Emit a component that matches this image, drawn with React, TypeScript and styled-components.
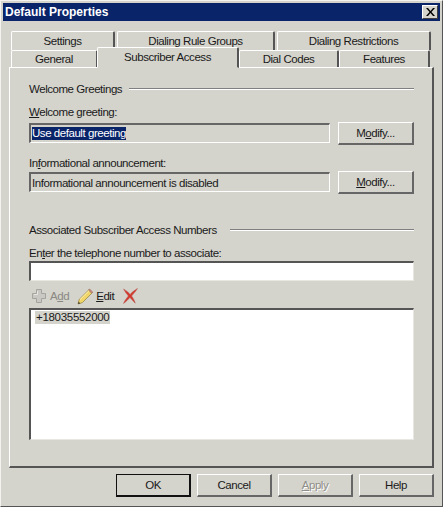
import styled, { createGlobalStyle } from "styled-components"

const GlobalStyle = createGlobalStyle`
    html, body {
        margin: 0;
        padding: 0;
        background: #d4d3cc;
    }
    * { box-sizing: border-box; }
`

const backTabs = [
    { label: "Settings", width: 104, gap: 2 },
    { label: "Dialing Rule Groups", width: 158, gap: 2 },
    { label: "Dialing Restrictions", width: 154, gap: 0 },
]

const PlusIcon = () => (
    <svg width="16" height="16" viewBox="0 0 16 16">
        <path d="M5.500 1.500h5v4h4v5h-4v4h-5v-4h-4v-5h4z" fill="#c9c8c2" stroke="#a5a49e" />
        <path d="M6.500 3v3.500H3" fill="none" stroke="#e8e7e2" />
    </svg>
)

const PencilIcon = () => (
    <svg width="16" height="17" viewBox="0 0 16 17">
        <path d="M1 16l1.200-4.600L11.600 2l3.200 3.200-9.400 9.400z" fill="#f2d568" stroke="#9a8a45" strokeWidth="0.8" />
        <path d="M3 11.600L12.300 2.400" stroke="#fff3b5" />
        <path d="M11.600 2l1-1 3.200 3.200-1 1z" fill="#d98b80" stroke="#8f6a55" strokeWidth="0.6" />
        <path d="M1 16l.6-2.400 1.800 1.800z" fill="#4c4536" />
    </svg>
)

const DeleteIcon = () => (
    <svg width="16" height="16" viewBox="0 0 15 15">
        <path d="M1.500 1c3.500 2.200 5 3.800 6.100 5C9.500 4 11.500 2.300 14.500.5c-1.700 2.800-3.900 5-5.500 7 1.300 1.800 2.500 3.900 3.400 6.700-1.800-1.900-3.500-3.800-5-5.300C5.700 10.700 4 12.500 1.500 14.500c1-2.800 2.800-5 4.500-7C4.300 5.500 2.800 3.500 1.500 1z" fill="#d4372c" stroke="#b9584f" strokeWidth="0.5" />
    </svg>
)

const App = () => {
    return (
        <>
            <GlobalStyle />
            <Dialog>
                <TitleBar>
                    <Title>Default Properties</Title>
                    <CloseButton>
                        <svg width="9" height="8" viewBox="0 0 9 8">
                            <path d="M0 0h2l2.500 3L7 0h2L5.500 4 9 8H7L4.500 5 2 8H0l3.500-4z" fill="#000" />
                        </svg>
                    </CloseButton>
                </TitleBar>
                <TabArea>
                    <BackRow>
                        {backTabs.map((tab) => (
                            <Tab key={tab.label} $width={tab.width} $gap={tab.gap}>{tab.label}</Tab>
                        ))}
                    </BackRow>
                    <FrontRow>
                        <Tab $width={87} $gap={0}>General</Tab>
                        <SelectedTab $width={142} $gap={0}>Subscriber Access</SelectedTab>
                        <Tab $width={100} $gap={0}>Dial Codes</Tab>
                        <Tab $width={91} $gap={0}>Features</Tab>
                    </FrontRow>
                </TabArea>
                <Panel>
                    <GroupHeading>
                        <span>Welcome Greetings</span>
                        <Rule />
                    </GroupHeading>
                    <FieldLabel $top={9}><Key>W</Key>elcome greeting:</FieldLabel>
                    <FieldRow>
                        <ReadOnlyBox><Selected>Use default greeting</Selected></ReadOnlyBox>
                        <SideButton>M<Key>o</Key>dify...</SideButton>
                    </FieldRow>
                    <FieldLabel $top={11}>In<Key>f</Key>ormational announcement:</FieldLabel>
                    <SecondFieldRow>
                        <ReadOnlyBox>Informational announcement is disabled</ReadOnlyBox>
                        <SideButton><Key>M</Key>odify...</SideButton>
                    </SecondFieldRow>
                    <SecondHeading>
                        <span>Associated Subscriber Access Numbers</span>
                        <Rule />
                    </SecondHeading>
                    <FieldLabel $top={9}>En<Key>t</Key>er the telephone number to associate:</FieldLabel>
                    <PhoneInput />
                    <Toolbar>
                        <ToolButton $disabled>
                            <PlusIcon />
                            <span>A<Key>d</Key>d</span>
                        </ToolButton>
                        <ToolButton>
                            <PencilIcon />
                            <span><Key>E</Key>dit</span>
                        </ToolButton>
                        <ToolButton>
                            <DeleteIcon />
                        </ToolButton>
                    </Toolbar>
                    <NumberList>
                        <NumberItem>+18035552000</NumberItem>
                    </NumberList>
                </Panel>
                <Footer>
                    <DefaultButton>OK</DefaultButton>
                    <FooterButton>Cancel</FooterButton>
                    <FooterButton $disabled><Key>A</Key>pply</FooterButton>
                    <FooterButton>Help</FooterButton>
                </Footer>
            </Dialog>
        </>
    )
}

export default App

const Dialog = styled.div`
    width: 443px;
    height: 507px;
    display: flex;
    flex-direction: column;
    padding: 2px;
    background: #d4d3cc;
    border-left: 1px solid #f4f3ef;
    border-top: 1px solid #f4f3ef;
    border-right: 1px solid #555;
    border-bottom: 1px solid #555;
    font-family: "Liberation Sans", Arial, sans-serif;
    font-size: 11.5px;
    letter-spacing: -0.45px;
    color: #1a1a1a;
`

const TitleBar = styled.div`
    height: 18px;
    flex: none;
    display: flex;
    align-items: center;
    justify-content: space-between;
    padding: 0 2px;
    background: #0a246a;
`

const Title = styled.div`
    color: #fff;
    font-size: 12px;
    font-weight: bold;
    letter-spacing: 0;
`

const CloseButton = styled.div`
    width: 16px;
    height: 14px;
    display: flex;
    align-items: center;
    justify-content: center;
    background: #d4d3cc;
    border: 1px solid;
    border-color: #fff #404040 #404040 #fff;
`

const TabArea = styled.div`
    flex: none;
    display: flex;
    flex-direction: column;
    padding: 10px 0 0 8px;
`

const BackRow = styled.div`
    display: flex;
    height: 19px;
`

const FrontRow = styled.div`
    display: flex;
    align-items: flex-end;
    height: 17px;
    position: relative;
    z-index: 1;
`

const Tab = styled.div<{ $width: number; $gap: number }>`
    width: ${(p) => p.$width}px;
    margin-right: ${(p) => p.$gap}px;
    height: 100%;
    flex: none;
    display: flex;
    align-items: center;
    justify-content: center;
    background: #d4d3cc;
    border-top: 1px solid #fff;
    border-left: 1px solid #fff;
    border-right: 2px solid #555;
    border-radius: 2px 2px 0 0;
`

const SelectedTab = styled(Tab)`
    height: 21px;
    margin-left: -1px;
    padding-bottom: 1px;
    border-bottom: 1px solid #d4d3cc;
    margin-bottom: -1px;
`

const Panel = styled.div`
    width: 425px;
    height: 401px;
    flex: none;
    margin-left: 6px;
    padding: 14px 18px 0 19px;
    display: flex;
    flex-direction: column;
    background: #d4d3cc;
    border-top: 1px solid #fff;
    border-left: 1px solid #fff;
    border-right: 2px solid #555;
    border-bottom: 2px solid #555;
`

const GroupHeading = styled.div`
    display: flex;
    align-items: center;
    gap: 7px;
    height: 14px;
`

const SecondHeading = styled(GroupHeading)`
    margin-top: 29px;
    gap: 13px;
`

const Rule = styled.div`
    flex: 1;
    height: 2px;
    background: #808080;
    border-bottom: 1px solid #fff;
`

const FieldLabel = styled.div<{ $top: number }>`
    height: 14px;
    line-height: 14px;
    margin-top: ${(p) => p.$top}px;
`

const Key = styled.span`
    text-decoration: underline;
`

const FieldRow = styled.div`
    display: flex;
    align-items: center;
    gap: 8px;
    margin-top: 2px;
    height: 24px;
`

const SecondFieldRow = styled(FieldRow)`
    margin-top: 0;
`

const ReadOnlyBox = styled.div`
    width: 301px;
    height: 20px;
    flex: none;
    display: flex;
    align-items: center;
    padding-left: 1px;
    border: 1px solid;
    border-width: 2px 1px 1px 2px;
    border-color: #666 #fff #fff #666;
    white-space: nowrap;
`

const Selected = styled.span`
    background: #0a246a;
    color: #fff;
    line-height: 13px;
`

const SideButton = styled.div`
    width: 76px;
    height: 23px;
    flex: none;
    display: flex;
    align-items: center;
    justify-content: center;
    border: 1px solid;
    border-width: 1px 2px 2px 1px;
    border-color: #fff #666 #666 #fff;
`

const PhoneInput = styled.div`
    width: 385px;
    height: 20px;
    margin-top: 1px;
    background: #fff;
    border: 1px solid;
    border-width: 2px 1px 1px 2px;
    border-color: #555 #e8e7e2 #e8e7e2 #555;
`

const Toolbar = styled.div`
    display: flex;
    align-items: center;
    gap: 8px;
    height: 18px;
    margin-top: 6px;
    padding-left: 2px;
`

const ToolButton = styled.div<{ $disabled?: boolean }>`
    display: flex;
    align-items: center;
    gap: 3px;
    color: ${(p) => (p.$disabled ? "#8a8983" : "#1a1a1a")};
`

const NumberList = styled.div`
    width: 385px;
    height: 132px;
    margin-top: 3px;
    padding: 1px 0 0 4px;
    background: #fff;
    border: 1px solid;
    border-width: 2px 1px 1px 2px;
    border-color: #555 #e8e7e2 #e8e7e2 #555;
`

const NumberItem = styled.div`
    width: fit-content;
    padding: 0 1px;
    line-height: 13px;
    letter-spacing: -0.3px;
    background: #d4d3cc;
`

const Footer = styled.div`
    display: flex;
    justify-content: flex-end;
    gap: 6px;
    margin-top: 6px;
    padding-right: 6px;
`

const FooterButton = styled.div<{ $disabled?: boolean }>`
    width: 75px;
    height: 23px;
    display: flex;
    align-items: center;
    justify-content: center;
    border: 1px solid;
    border-width: 1px 2px 2px 1px;
    border-color: #fff #666 #666 #fff;
    color: ${(p) => (p.$disabled ? "#8f8e88" : "#1a1a1a")};
    text-shadow: ${(p) => (p.$disabled ? "1px 1px 0 #fff" : "none")};
`

const DefaultButton = styled(FooterButton)`
    border-color: #111;
`
